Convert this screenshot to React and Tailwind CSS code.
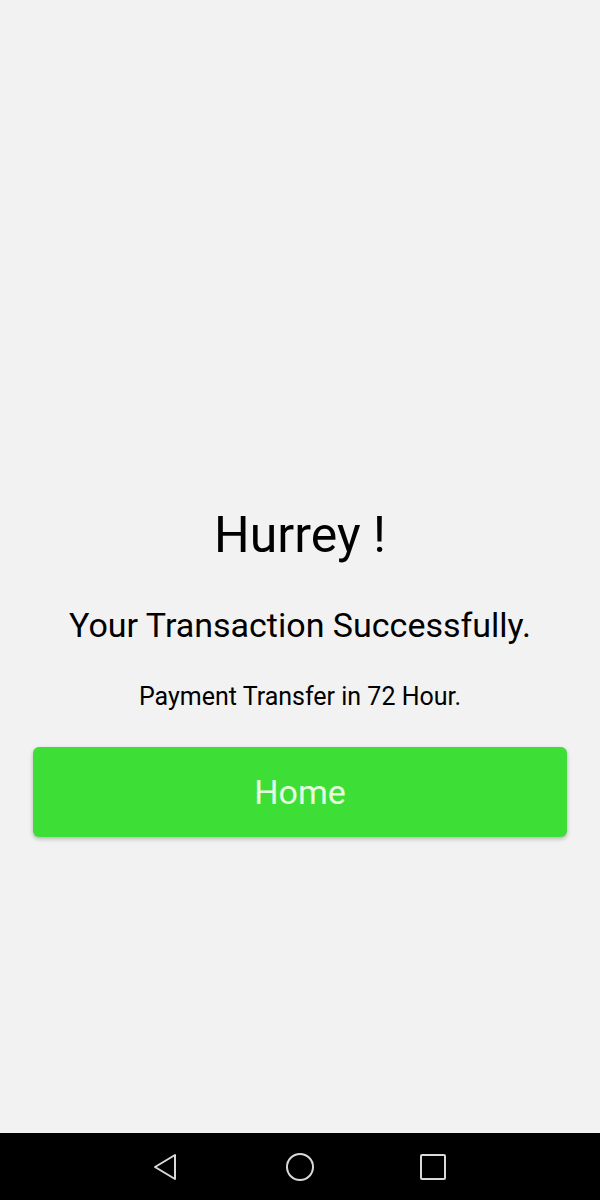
import React from 'react';

const NavBar = () => (
  <div className="h-[67px] bg-black flex items-center justify-center gap-[103px]">
    <svg width="30" height="30" viewBox="0 0 30 30" fill="none" stroke="#d9d9d9" strokeWidth="2" strokeLinejoin="round">
      <path d="M23 3 L23 27 L3 15 Z" />
    </svg>
    <svg width="30" height="30" viewBox="0 0 30 30" fill="none" stroke="#d9d9d9" strokeWidth="2">
      <circle cx="15" cy="15" r="13" />
    </svg>
    <svg width="30" height="30" viewBox="0 0 30 30" fill="none" stroke="#d9d9d9" strokeWidth="2">
      <rect x="3" y="3" width="24" height="24" rx="1" />
    </svg>
  </div>
);

export default function App() {
  return (
    <div className="w-[600px] h-[1200px] flex flex-col bg-[#f2f2f2] font-['Roboto',sans-serif]">
      <div className="flex-1 flex flex-col items-center pt-[505px] px-[33px]">
        <h1 className="text-[50px] leading-[60px] text-black">Hurrey !</h1>
        <p className="mt-[40px] text-[34px] leading-[40px] text-black">Your Transaction Successfully.</p>
        <p className="mt-[37px] text-[25px] leading-[30px] text-black">Payment Transfer in 72 Hour.</p>
        <button className="mt-[35px] w-full h-[90px] rounded-[6px] bg-[#3ddf37] text-[#e6fce0] text-[34px] shadow-[0_2px_4px_rgba(0,0,0,0.25)]">
          Home
        </button>
      </div>
      <NavBar />
    </div>
  );
}
